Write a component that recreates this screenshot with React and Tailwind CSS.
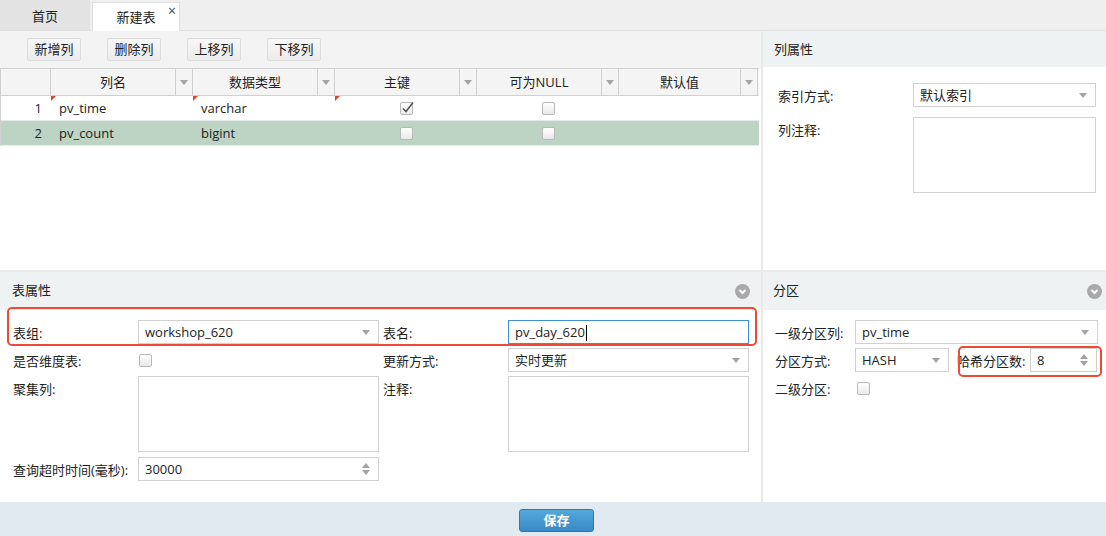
import React from 'react';

const font = "font-['Open_Sans','Noto_Sans_CJK_SC',sans-serif]";

function Arrow() {
    return <span className="w-0 h-0 border-x-[4px] border-x-transparent border-t-[5px] border-t-[#a3a3a3]" />;
}

function Spinner() {
    return (
        <span className="flex flex-col gap-[2px]">
            <span className="w-0 h-0 border-x-[4px] border-x-transparent border-b-[5px] border-b-[#a3a3a3]" />
            <span className="w-0 h-0 border-x-[4px] border-x-transparent border-t-[5px] border-t-[#a3a3a3]" />
        </span>
    );
}

function Select({ value, className = '' }) {
    return (
        <div className={`flex items-center justify-between h-[24px] border border-[#d0d0d0] bg-white pl-[6px] pr-[8px] ${className}`}>
            <span className="pt-px">{value}</span>
            <Arrow />
        </div>
    );
}

function NumberInput({ value, className = '' }) {
    return (
        <div className={`flex items-center justify-between h-[24px] border border-[#d0d0d0] bg-white pl-[6px] pr-[8px] ${className}`}>
            <span className="pt-px">{value}</span>
            <Spinner />
        </div>
    );
}

function Checkbox({ checked }) {
    return (
        <span className="relative inline-block w-[13px] h-[13px] rounded-[2px] border border-[#b8b8b8] bg-linear-to-b from-white to-[#e9e9e9]">
            {checked && (
                <svg className="absolute -top-[3px] left-0" width="14" height="15" viewBox="0 0 14 15">
                    <path d="M2 8.5 L5 11.5 L12 2.5" fill="none" stroke="#555" strokeWidth="1.6" />
                </svg>
            )}
        </span>
    );
}

function Collapse() {
    return (
        <span className="flex items-center justify-center w-[15px] h-[15px] rounded-full bg-[#a9a9a9]">
            <svg width="9" height="9" viewBox="0 0 9 9">
                <path d="M1.5 3 L4.5 6 L7.5 3" fill="none" stroke="#fff" strokeWidth="2" />
            </svg>
        </span>
    );
}

function Mark() {
    return <span className="absolute left-0 top-0 w-0 h-0 border-t-[5px] border-r-[5px] border-t-[#d9452f] border-r-transparent" />;
}

// libellé de formulaire : hauteur fixe de 24px, texte décalé d'un pixel
function Label({ children, className = '' }) {
    return <div className={`h-[24px] leading-[24px] pt-px whitespace-nowrap ${className}`}>{children}</div>;
}

const columns = ['列名', '数据类型', '主键', '可为NULL', '默认值'];

const rows = [
    { id: 1, name: 'pv_time', type: 'varchar', pk: true, marked: true },
    { id: 2, name: 'pv_count', type: 'bigint', pk: false, selected: true },
];

export default function App() {
    return (
        <div className={`w-[1106px] h-[536px] flex flex-col bg-[#e9e9e9] text-[13px] text-[#222] ${font}`}>
            {/* Onglets */}
            <div className="h-[31px] flex bg-[#efefef] border-b border-[#e0e0e0]">
                <div className="w-[90px] bg-[#e3e3e3] flex items-center justify-center pt-[3px]">首页</div>
                <div className="relative ml-[2px] mt-[2px] w-[88px] h-[29px] bg-white border-x border-t border-[#dedede] flex items-center justify-center pt-px">
                    新建表
                    <span className="absolute right-[3px] -top-[3px] text-[14px] text-[#444]">×</span>
                </div>
            </div>

            <div className="grid grid-cols-[761px_343px] grid-rows-[239px_230px] gap-[2px]">
                {/* Colonnes */}
                <div className="bg-white flex flex-col">
                    <div className="h-[37px] bg-[#f3f3f3] flex items-start gap-[26px] pl-[27px] pt-[7px]">
                        {['新增列', '删除列', '上移列', '下移列'].map((label) => (
                            <button
                                key={label}
                                className="w-[54px] h-[23px] pt-px rounded-[2px] border border-[#dcdcdc] bg-linear-to-b from-[#f7f7f7] to-[#ececec] text-[13px] text-[#222]"
                            >
                                {label}
                            </button>
                        ))}
                    </div>
                    <div className="w-[759px] border-l border-[#d0d0d0]">
                        <div className="h-[28px] grid grid-cols-[50px_125px_17px_125px_17px_125px_17px_125px_17px_122px_17px] bg-[#f4f4f4] border-y border-[#d0d0d0]">
                            <div className="border-r border-[#d0d0d0]" />
                            {columns.map((c) => (
                                <React.Fragment key={c}>
                                    <div className="flex items-center justify-center pt-px border-r border-[#d0d0d0]">{c}</div>
                                    <div className="flex items-center justify-center border-r border-[#d0d0d0]">
                                        <Arrow />
                                    </div>
                                </React.Fragment>
                            ))}
                        </div>
                        {rows.map((r) => (
                            <div
                                key={r.id}
                                className={`h-[25px] grid grid-cols-[50px_142px_142px_142px_142px_139px] border-b border-[#e3eaee] ${r.selected ? 'bg-[#bdd3c3]' : 'bg-white'}`}
                            >
                                <div className="flex items-center justify-end pr-[9px] pt-px">{r.id}</div>
                                <div className="relative flex items-center pl-[8px] pt-px">
                                    {r.marked && <Mark />}
                                    {r.name}
                                </div>
                                <div className="relative flex items-center pl-[8px] pt-px">
                                    {r.marked && <Mark />}
                                    {r.type}
                                </div>
                                <div className="relative flex items-center justify-center">
                                    {r.marked && <Mark />}
                                    <Checkbox checked={r.pk} />
                                </div>
                                <div className="flex items-center justify-center">
                                    <Checkbox />
                                </div>
                                <div />
                            </div>
                        ))}
                    </div>
                </div>

                {/* Propriétés de colonne */}
                <div className="bg-white flex flex-col">
                    <div className="h-[36px] bg-[#eef2f2] flex items-center pl-[11px] pt-px">列属性</div>
                    <div className="grid grid-cols-[135px_183px] gap-y-[10px] pl-[15px] pt-[16px]">
                        <Label>索引方式:</Label>
                        <Select value="默认索引" />
                        <Label>列注释:</Label>
                        <div className="h-[76px] border border-[#d0d0d0]" />
                    </div>
                </div>

                {/* Propriétés de table */}
                <div className="relative bg-white flex flex-col">
                    <div className="h-[38px] bg-[#eef2f2] flex items-center justify-between pl-[12px] pr-[11px]">
                        <span>表属性</span>
                        <Collapse />
                    </div>
                    <div className="grid grid-cols-[125px_241px_129px_241px] gap-y-[4px] pl-[13px] pt-[10px]">
                        <Label>表组:</Label>
                        <Select value="workshop_620" />
                        <Label className="pl-[4px]">表名:</Label>
                        <div className="h-[24px] border border-[#3d8fd6] flex items-center pl-[6px] pt-px">
                            pv_day_620
                            <span className="w-px h-[16px] bg-black ml-px" />
                        </div>

                        <Label>是否维度表:</Label>
                        <div className="flex items-center pl-px">
                            <Checkbox />
                        </div>
                        <Label className="pl-[4px]">更新方式:</Label>
                        <Select value="实时更新" />

                        <Label>聚集列:</Label>
                        <div className="h-[76px] border border-[#d0d0d0]" />
                        <Label className="pl-[4px]">注释:</Label>
                        <div className="h-[76px] border border-[#d0d0d0]" />

                        <Label className="mt-[1px]">查询超时时间(毫秒):</Label>
                        <NumberInput value="30000" className="mt-[1px]" />
                    </div>
                    <div className="absolute left-[7px] top-[35px] w-[750px] h-[39px] border-2 border-[#ef4a33] rounded-[5px]" />
                </div>

                {/* Partition */}
                <div className="relative bg-white flex flex-col">
                    <div className="h-[38px] bg-[#eef2f2] flex items-center justify-between pl-[10px] pr-[4px]">
                        <span>分区</span>
                        <Collapse />
                    </div>
                    <div className="flex flex-col gap-[4px] pl-[12px] pt-[10px]">
                        <div className="flex">
                            <Label className="w-[80px]">一级分区列:</Label>
                            <Select value="pv_time" className="w-[243px]" />
                        </div>
                        <div className="flex">
                            <Label className="w-[80px]">分区方式:</Label>
                            <Select value="HASH" className="w-[94px]" />
                            <Label className="w-[81px] pl-[8px]">哈希分区数:</Label>
                            <NumberInput value="8" className="w-[67px]" />
                        </div>
                        <div className="flex">
                            <Label className="w-[80px]">二级分区:</Label>
                            <div className="flex items-center pl-[2px]">
                                <Checkbox />
                            </div>
                        </div>
                    </div>
                    <div className="absolute left-[195px] top-[74px] w-[144px] h-[31px] border-2 border-[#ef4a33] rounded-[5px]" />
                </div>
            </div>

            {/* Pied */}
            <div className="flex-1 bg-[#e0eaf0] flex justify-center items-start pt-[7px] pl-[7px]">
                <button className="w-[75px] h-[23px] rounded-[3px] border border-[#2e78b2] bg-linear-to-b from-[#53a8dc] to-[#3989c6] text-white font-bold text-[13px]">
                    保存
                </button>
            </div>
        </div>
    );
}
